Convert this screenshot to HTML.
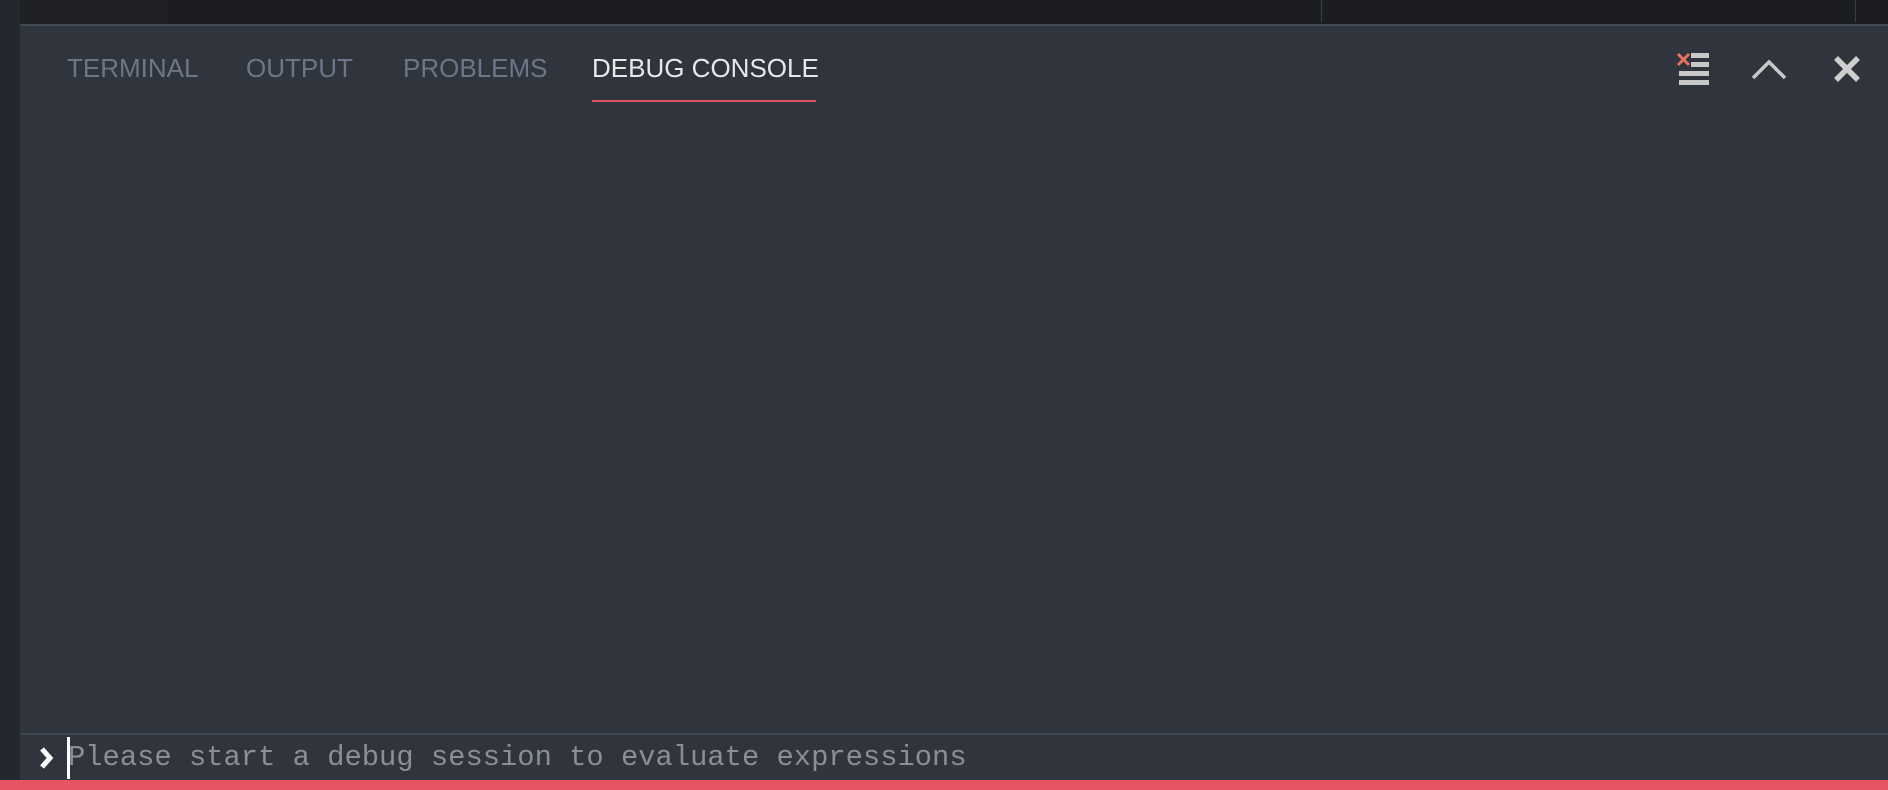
<!DOCTYPE html>
<html><head><meta charset="utf-8"><style>
html,body{margin:0;padding:0;width:1888px;height:790px;overflow:hidden;background:#2f343d;font-family:"Liberation Sans",sans-serif;}
.abs{position:absolute}
.tab{position:absolute;top:53px;font-size:26px;color:#6b7788;white-space:nowrap}
</style></head><body>
<div class="abs" style="left:0;top:0;width:1888px;height:24px;background:#1b1d21"></div>
<div class="abs" style="left:20px;top:0;width:148px;height:23px;background:#1e2024"></div>
<div class="abs" style="left:1321px;top:0;width:1px;height:22px;background:#3a3e45"></div>
<div class="abs" style="left:1855px;top:0;width:1px;height:22px;background:#3a3e45"></div>
<div class="abs" style="left:0;top:24px;width:1888px;height:2px;background:#434a55"></div>
<div class="abs" style="left:0;top:0;width:20px;height:790px;background:#23272e"></div>

<div class="tab" style="left:67px">TERMINAL</div>
<div class="tab" style="left:246px">OUTPUT</div>
<div class="tab" style="left:403px">PROBLEMS</div>
<div class="tab" style="left:592px;color:#e8e8e8">DEBUG CONSOLE</div>
<div class="abs" style="left:592px;top:100px;width:224px;height:2px;background:#e0525f"></div>

<svg class="abs" style="left:1670px;top:48px" width="48" height="40" viewBox="0 0 48 40">
<g stroke="#e8725f" stroke-width="3"><line x1="8" y1="6" x2="19" y2="17"/><line x1="19" y1="6" x2="8" y2="17"/></g>
<g fill="#c8c8c8"><rect x="21" y="5" width="18" height="5"/><rect x="21" y="14" width="18" height="5"/><rect x="9" y="23" width="30" height="5"/><rect x="9" y="32" width="30" height="5"/></g>
</svg>
<svg class="abs" style="left:1750px;top:56px" width="38" height="26" viewBox="0 0 38 26">
<polyline points="3,22 19,6 35,22" fill="none" stroke="#c8c8c8" stroke-width="3.5"/>
</svg>
<svg class="abs" style="left:1833px;top:55px" width="28" height="28" viewBox="0 0 28 28">
<g stroke="#cfcfcf" stroke-width="5.5"><line x1="3" y1="3" x2="25" y2="25"/><line x1="25" y1="3" x2="3" y2="25"/></g>
</svg>

<div class="abs" style="left:20px;top:733px;width:1868px;height:2px;background:#3f4550"></div>
<svg class="abs" style="left:38px;top:746px" width="18" height="24" viewBox="0 0 18 24">
<polyline points="4,3 12,12 4,21" fill="none" stroke="#ffffff" stroke-width="5"/>
</svg>
<div class="abs" style="left:67px;top:737px;width:3px;height:42px;background:#ffffff"></div>
<div class="abs" style="left:68px;top:741px;font-family:'Liberation Mono',monospace;font-size:28.8px;color:#8a8f96;white-space:pre">Please start a debug session to evaluate expressions</div>
<div class="abs" style="left:0;top:780px;width:1888px;height:10px;background:#e65361"></div>
</body></html>
